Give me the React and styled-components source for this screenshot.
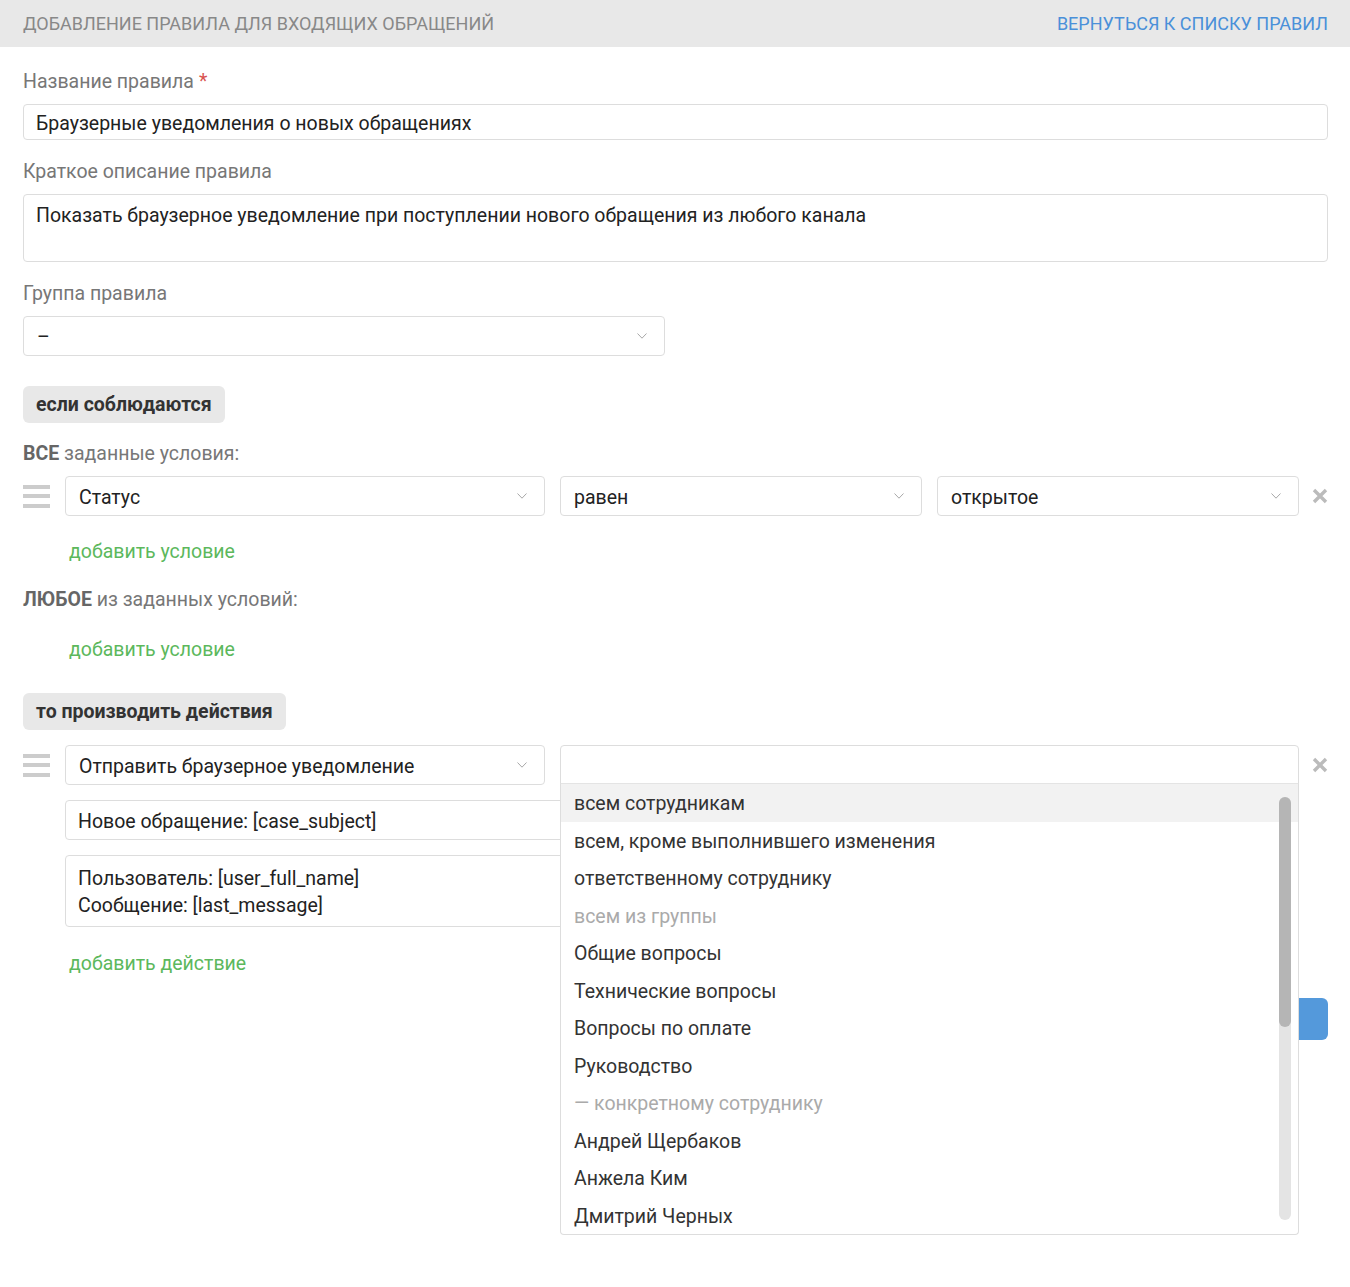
import React from 'react';
import styled, { createGlobalStyle } from 'styled-components';

const GlobalStyle = createGlobalStyle`
  html, body { margin: 0; padding: 0; background: #fff; }
  body { font-family: Roboto, "Noto Sans", Arial, sans-serif; color: #222; }
  * { box-sizing: border-box; }
`;

const Page = styled.div`
  width: 100%;
  min-height: 1287px;
  background: #fff;
`;

const Header = styled.header`
  display: flex;
  align-items: center;
  justify-content: space-between;
  height: 47px;
  padding: 0 22px 0 23px;
  background: #e8e8e8;
`;

const Title = styled.h1`
  margin: 0;
  font-size: 18px;
  font-weight: 400;
  color: #888;
  text-transform: uppercase;
`;

const BackLink = styled.a`
  font-size: 18px;
  color: #4a90d9;
  text-decoration: none;
  text-transform: uppercase;
`;

const Form = styled.main`
  padding: 23px 22px 0 23px;
  font-size: 19.5px;
`;

const Field = styled.div`
  margin-bottom: 20px;
`;

const Label = styled.div`
  padding-top: 2px;
  font-size: 19.5px;
  line-height: 20px;
  color: #777;
  margin-bottom: 12px;
`;

const Required = styled.span`
  color: #d9534f;
  margin-left: 5px;
`;

const TextInput = styled.input`
  display: block;
  width: 100%;
  height: ${(p) => p.$h || 40}px;
  padding: 3px 12px 0;
  border: 1px solid #ddd;
  border-radius: 4px;
  background: #fff;
  font-family: inherit;
  font-size: 19.5px;
  color: #222;
  outline: none;
`;

const TextArea = styled.textarea`
  display: block;
  width: 100%;
  height: ${(p) => p.$h}px;
  padding: ${(p) => p.$pt || 7}px 12px 0;
  border: 1px solid #ddd;
  border-radius: 4px;
  background: #fff;
  font-family: inherit;
  font-size: 19.5px;
  line-height: 27px;
  color: #222;
  resize: none;
  overflow: hidden;
  outline: none;
`;

const SelectBox = styled.div`
  position: relative;
  display: flex;
  align-items: center;
  justify-content: space-between;
  height: 40px;
  padding: 2px 17px 0 13px;
  border: 1px solid #ddd;
  border-radius: ${(p) => (p.$open ? '4px 4px 0 0' : '4px')};
  background: #fff;
  font-size: 19.5px;
  color: #222;
  width: ${(p) => p.$width || 'auto'};
  grid-column: ${(p) => p.$span || 'auto'};
  svg { margin-top: -2px; }
`;

const Badge = styled.div`
  display: inline-block;
  height: 37px;
  line-height: 37px;
  padding: 0 13px;
  margin-top: ${(p) => p.$top}px;
  background: #e8e8e8;
  border-radius: 6px;
  font-size: 19.5px;
  font-weight: 700;
  color: #333;
`;

const GroupLabel = styled.div`
  margin-top: ${(p) => p.$top || 19}px;
  margin-bottom: 12px;
  padding-top: 2px;
  font-size: 19.5px;
  line-height: 20px;
  color: #777;
  b { color: #666; font-weight: 700; }
`;

const AddLink = styled.a`
  display: block;
  width: max-content;
  margin-top: ${(p) => p.$top}px;
  margin-left: 46px;
  padding-top: 2px;
  font-size: 19.5px;
  line-height: 20px;
  color: #5cb85c;
  text-decoration: none;
  cursor: pointer;
`;

const RuleGrid = styled.div`
  display: grid;
  grid-template-columns: 27px 480fr 362fr 362fr 14px;
  column-gap: 15px;
  row-gap: 15px;
  align-items: center;
  margin-top: ${(p) => p.$top || 0}px;
`;

const Handle = styled.div`
  display: flex;
  flex-direction: column;
  gap: 5.5px;
  width: 27px;
  cursor: grab;
  span {
    display: block;
    height: 4px;
    background: #ccc;
  }
`;

const RemoveBtn = styled.button`
  display: flex;
  align-items: center;
  justify-content: flex-end;
  width: 14px;
  height: 40px;
  padding: 0;
  border: 0;
  background: none;
  overflow: visible;
  cursor: pointer;
`;

const Wide = styled.div`
  grid-column: 2 / 5;
`;

const Dropdown = styled.div`
  position: absolute;
  top: calc(100% - 1px);
  left: -1px;
  right: -1px;
  z-index: 10;
  height: 452px;
  overflow: hidden;
  background: #fff;
  border: 1px solid #ddd;
  border-top-color: #e4e4e4;
  border-radius: 0 0 4px 4px;
`;

const Option = styled.div`
  height: 37.5px;
  padding: 3px 0 0 13px;
  line-height: 34.5px;
  font-size: 19.5px;
  color: ${(p) => (p.$muted ? '#aaa' : '#333')};
  background: ${(p) => (p.$active ? '#f2f2f2' : 'transparent')};
  white-space: nowrap;
`;

const ScrollTrack = styled.div`
  position: absolute;
  top: 13px;
  right: 7px;
  bottom: 14px;
  width: 12px;
  border-radius: 6px;
  background: #e4e4e4;
`;

const ScrollThumb = styled.div`
  height: 230px;
  border-radius: 6px;
  background: #b5b5b5;
`;

const Footer = styled.div`
  display: flex;
  justify-content: flex-end;
  margin-top: 24px;
`;

const SaveButton = styled.button`
  height: 42px;
  padding: 0 42px;
  border: 0;
  border-radius: 6px;
  background: #5499db;
  color: #fff;
  font-family: inherit;
  font-size: 19.5px;
  cursor: pointer;
`;

const Chevron = () => (
  <svg width="10" height="6" viewBox="0 0 10 6" aria-hidden="true">
    <polyline points="0.5,0.5 5,5.2 9.5,0.5" fill="none" stroke="#a8a8a8" strokeWidth="1" />
  </svg>
);

const CloseIcon = () => (
  <svg width="16" height="16" viewBox="0 0 16 16" aria-hidden="true" style={{ flex: 'none' }}>
    <path d="M2 2 L14 14 M14 2 L2 14" stroke="#bbb" strokeWidth="3.4" strokeLinecap="butt" />
  </svg>
);

const DragHandle = () => (
  <Handle>
    <span />
    <span />
    <span />
  </Handle>
);

const Select = ({ value, open, span, width, children }) => (
  <SelectBox $open={open} $span={span} $width={width}>
    <span>{value}</span>
    {!open && <Chevron />}
    {children}
  </SelectBox>
);

const options = [
  { label: 'всем сотрудникам', active: true },
  { label: 'всем, кроме выполнившего изменения' },
  { label: 'ответственному сотруднику' },
  { label: 'всем из группы', muted: true },
  { label: 'Общие вопросы' },
  { label: 'Технические вопросы' },
  { label: 'Вопросы по оплате' },
  { label: 'Руководство' },
  { label: '— конкретному сотруднику', muted: true },
  { label: 'Андрей Щербаков' },
  { label: 'Анжела Ким' },
  { label: 'Дмитрий Черных' },
];

export default function App() {
  return (
    <Page>
      <GlobalStyle />
      <Header>
        <Title>Добавление правила для входящих обращений</Title>
        <BackLink href="#">Вернуться к списку правил</BackLink>
      </Header>
      <Form>
        <Field>
          <Label>
            Название правила<Required>*</Required>
          </Label>
          <TextInput $h={36} readOnly value="Браузерные уведомления о новых обращениях" />
        </Field>
        <Field>
          <Label>Краткое описание правила</Label>
          <TextArea
            $h={68}
            readOnly
            value="Показать браузерное уведомление при поступлении нового обращения из любого канала"
          />
        </Field>
        <Field>
          <Label>Группа правила</Label>
          <Select value="–" width="642px" />
        </Field>

        <Badge $top={10}>если соблюдаются</Badge>
        <GroupLabel>
          <b>ВСЕ</b> заданные условия:
        </GroupLabel>
        <RuleGrid>
          <DragHandle />
          <Select value="Статус" />
          <Select value="равен" />
          <Select value="открытое" />
          <RemoveBtn>
            <CloseIcon />
          </RemoveBtn>
        </RuleGrid>
        <AddLink $top={24}>добавить условие</AddLink>

        <GroupLabel $top={26}>
          <b>ЛЮБОЕ</b> из заданных условий:
        </GroupLabel>
        <AddLink $top={28}>добавить условие</AddLink>

        <Badge $top={33}>то производить действия</Badge>
        <RuleGrid $top={15}>
          <DragHandle />
          <Select value="Отправить браузерное уведомление" />
          <Select value="" open span="3 / 5">
            <Dropdown>
              {options.map((o) => (
                <Option key={o.label} $active={o.active} $muted={o.muted}>
                  {o.label}
                </Option>
              ))}
              <ScrollTrack>
                <ScrollThumb />
              </ScrollTrack>
            </Dropdown>
          </Select>
          <RemoveBtn>
            <CloseIcon />
          </RemoveBtn>
          <span />
          <Wide>
            <TextInput readOnly value="Новое обращение: [case_subject]" />
          </Wide>
          <span />
          <span />
          <Wide>
            <TextArea
              $h={72}
              $pt={9}
              readOnly
              value={'Пользователь: [user_full_name]\nСообщение: [last_message]'}
            />
          </Wide>
        </RuleGrid>
        <AddLink $top={25}>добавить действие</AddLink>
        <Footer>
          <SaveButton>Сохранить</SaveButton>
        </Footer>
      </Form>
    </Page>
  );
}
